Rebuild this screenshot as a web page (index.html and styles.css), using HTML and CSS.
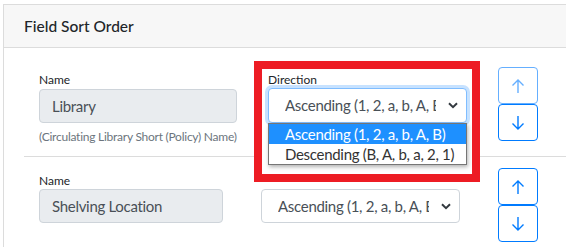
FILE: index.html
```html
<!DOCTYPE html>
<html>
<head>
<meta charset="utf-8">
<link rel="stylesheet" href="styles.css">
</head>
<body>
<div class="card">
  <div class="card-header">Field Sort Order</div>
  <div class="card-body">
    <div class="row row-first">
      <div class="name-col name-wide">
        <div class="label">Name</div>
        <div class="input">Library</div>
        <div class="help">(Circulating Library Short (Policy) Name)</div>
      </div>
      <div class="callout">
        <div class="label">Direction</div>
        <div class="select focused">
          <span class="select-text">Ascending (1, 2, a, b, A, B)</span>
          <svg class="chev" width="10" height="7" viewBox="0 0 10 7"><polyline points="1,1.2 5,5.2 9,1.2" fill="none" stroke="#343a40" stroke-width="2"/></svg>
        </div>
        <div class="dropdown">
          <div class="option selected">Ascending (1, 2, a, b, A, B)</div>
          <div class="option">Descending (B, A, b, a, 2, 1)</div>
        </div>
      </div>
      <div class="btns btns-first">
        <button class="btn disabled"><svg width="16" height="16" viewBox="0 0 16 16"><path d="M8 15V2M2.5 7.5L8 2l5.5 5.5" fill="none" stroke="currentColor" stroke-width="1.4"/></svg></button>
        <button class="btn"><svg width="16" height="16" viewBox="0 0 16 16"><path d="M8 1v13M2.5 8.5L8 14l5.5-5.5" fill="none" stroke="currentColor" stroke-width="1.4"/></svg></button>
      </div>
    </div>
    <div class="row row-second">
      <div class="name-col name-narrow">
        <div class="label">Name</div>
        <div class="input">Shelving Location</div>
      </div>
      <div class="select plain">
        <span class="select-text">Ascending (1, 2, a, b, A, B)</span>
        <svg class="chev" width="10" height="7" viewBox="0 0 10 7"><polyline points="1,1.2 5,5.2 9,1.2" fill="none" stroke="#343a40" stroke-width="2"/></svg>
      </div>
      <div class="btns btns-second">
        <button class="btn"><svg width="16" height="16" viewBox="0 0 16 16"><path d="M8 15V2M2.5 7.5L8 2l5.5 5.5" fill="none" stroke="currentColor" stroke-width="1.4"/></svg></button>
        <button class="btn"><svg width="16" height="16" viewBox="0 0 16 16"><path d="M8 1v13M2.5 8.5L8 14l5.5-5.5" fill="none" stroke="currentColor" stroke-width="1.4"/></svg></button>
      </div>
    </div>
  </div>
</div>
</body>
</html>
```

FILE: styles.css
```css
html, body {
  margin: 0;
  padding: 0;
  background: #ffffff;
  overflow: hidden;
  width: 566px;
  height: 247px;
}

body {
  font-family: Lato, "Noto Sans", sans-serif;
  color: #212529;
}

.card {
  margin: 4px 0 0 3px;
  width: 640px;
  border: 1px solid #dcdcdc;
  background: #ffffff;
}

.card-header {
  background: #f7f7f7;
  border-bottom: 1px solid #dcdcdc;
  padding: 12px 20px;
  font-size: 15.5px;
  line-height: 18px;
  font-weight: 500;
  color: #212529;
}

.card-body {
  padding: 7px 0 0 20px;
}

.row {
  display: flex;
  align-items: flex-start;
  padding: 12px 0 11px 15px;
}

.row-second {
  border-top: 1px solid #dcdcdc;
  padding-top: 11px;
}

.name-col {
  padding-top: 3px;
}

.name-wide { width: 198px; }
.name-narrow { width: 184px; }

.label {
  font-size: 12px;
  line-height: 16px;
  padding-top: 2px;
  color: #212529;
}

.input {
  height: 34px;
  box-sizing: border-box;
  border: 1px solid #ced4da;
  border-radius: 4px;
  background: #e9ecef;
  color: #495057;
  font-size: 15px;
  letter-spacing: -0.3px;
  line-height: 32px;
  padding-left: 12px;
}

.row-first .input { margin-top: 1px; }

.help {
  margin-top: 6px;
  font-size: 12px;
  letter-spacing: -0.25px;
  line-height: 16px;
  color: #6c757d;
  white-space: nowrap;
}

.callout {
  position: relative;
  z-index: 2;
  margin: -6px 0 -40px 17px;
  width: 226px;
  height: 121px;
  box-sizing: border-box;
  border: 8px solid #ed1c24;
  background: #ffffff;
  padding: 1px 5px 0 6px;
}

.select {
  position: relative;
  width: 199px;
  height: 35px;
  box-sizing: border-box;
  border: 1px solid #ced4da;
  border-radius: 4px;
  background: #ffffff;
  color: #495057;
  font-size: 15px;
  letter-spacing: -0.3px;
  line-height: 33px;
  padding-left: 16px;
  overflow: hidden;
}

.select.focused {
  border-color: #80bdff;
  box-shadow: 0 0 0 3px rgba(0, 123, 255, 0.22);
}

.select.plain {
  margin-left: 38px;
  margin-top: 21px;
  height: 34px;
  line-height: 32px;
}

.select-text {
  display: block;
  width: 151px;
  overflow: hidden;
  white-space: nowrap;
}

.chev {
  position: absolute;
  right: 8px;
  top: 13px;
}

.dropdown {
  position: relative;
  width: 199px;
  box-sizing: border-box;
  border: 1px solid #767676;
  background: #ffffff;
  box-shadow: 1px 2px 4px rgba(0, 0, 0, 0.3);
}

.option {
  height: 20px;
  line-height: 21px;
  font-size: 15px;
  letter-spacing: -0.3px;
  padding-left: 16px;
  color: #333333;
  white-space: nowrap;
}

.option.selected {
  background: #1e90ff;
  color: #ffffff;
}

.btns {
  display: flex;
  flex-direction: column;
  width: 40px;
}

.btns-first { margin-left: 18px; }
.btns-second { margin-left: 38px; }

.btn {
  width: 40px;
  height: 37px;
  box-sizing: border-box;
  border: 1px solid #007bff;
  border-radius: 4px;
  background: #ffffff;
  color: #007bff;
  padding: 0;
  display: flex;
  align-items: center;
  justify-content: center;
}

.btn.disabled {
  opacity: 0.6;
}
```
